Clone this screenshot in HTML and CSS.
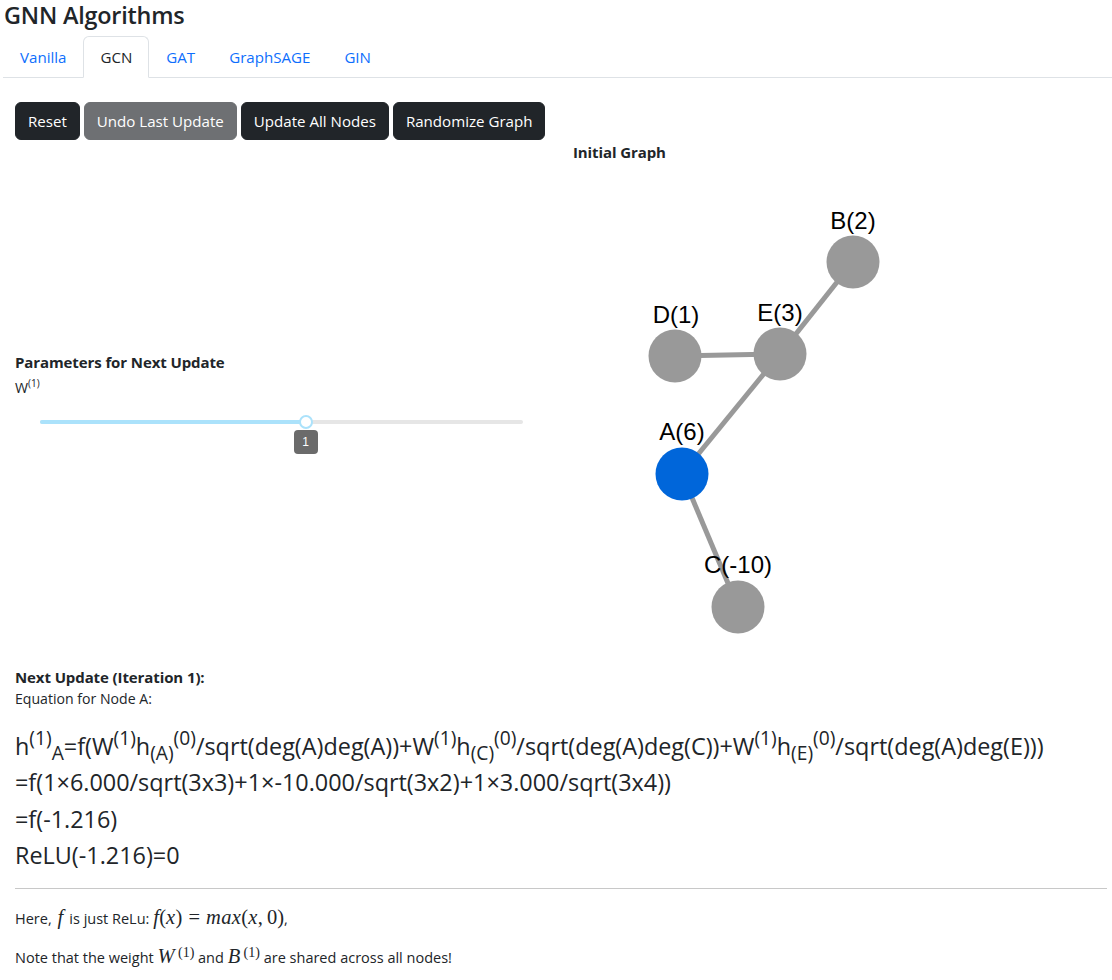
FILE: index.html
```html
<!DOCTYPE html>
<html>
<head>
<meta charset="utf-8">
<link rel="stylesheet" href="styles.css">
</head>
<body>
<div class="app">
  <h1 class="title">GNN Algorithms</h1>
  <ul class="tabs">
    <li class="tab">Vanilla</li>
    <li class="tab active">GCN</li>
    <li class="tab">GAT</li>
    <li class="tab">GraphSAGE</li>
    <li class="tab">GIN</li>
  </ul>
  <div class="content">
    <div class="buttons">
      <button class="btn">Reset</button>
      <button class="btn disabled">Undo Last Update</button>
      <button class="btn">Update All Nodes</button>
      <button class="btn">Randomize Graph</button>
    </div>
    <div class="main">
      <div class="left">
        <div class="params">
          <div class="bold">Parameters for Next Update</div>
          <div class="wlabel">W<sup>(1)</sup></div>
          <div class="slider">
            <div class="rail"></div>
            <div class="track" style="width:55%"></div>
            <div class="thumb" style="left:55%"></div>
            <div class="vlabel" style="left:55%">1</div>
          </div>
        </div>
      </div>
      <div class="right">
        <div class="gtitle">Initial Graph</div>
        <svg class="graph" width="540" height="480" viewBox="0 0 540 480">
          <g stroke="#999" stroke-width="5">
            <line x1="297" y1="99" x2="224" y2="191"/>
            <line x1="119" y1="193" x2="224" y2="191"/>
            <line x1="224" y1="191" x2="126" y2="311"/>
            <line x1="126" y1="311" x2="182" y2="444"/>
          </g>
          <g fill="#999">
            <circle cx="297" cy="99" r="26.5"/>
            <circle cx="224" cy="191" r="26.5"/>
            <circle cx="119" cy="193" r="26.5"/>
            <circle cx="182" cy="444" r="26.5"/>
          </g>
          <circle cx="126" cy="311" r="26.5" fill="#0066da"/>
          <g class="glabels" text-anchor="middle">
            <text x="297" y="66">B(2)</text>
            <text x="224" y="158">E(3)</text>
            <text x="120" y="160">D(1)</text>
            <text x="126" y="277">A(6)</text>
            <text x="182" y="410">C(-10)</text>
          </g>
        </svg>
      </div>
    </div>
    <div class="update">
      <div class="bold">Next Update (Iteration 1):</div>
      <div class="small">Equation for Node A:</div>
      <div class="eq">
        <div>h<sup>(1)</sup><sub>A</sub>=f(W<sup>(1)</sup>h<sub>(A)</sub><sup>(0)</sup>/sqrt(deg(A)deg(A))+W<sup>(1)</sup>h<sub>(C)</sub><sup>(0)</sup>/sqrt(deg(A)deg(C))+W<sup>(1)</sup>h<sub>(E)</sub><sup>(0)</sup>/sqrt(deg(A)deg(E)))</div>
        <div>=f(1×6.000/sqrt(3x3)+1×-10.000/sqrt(3x2)+1×3.000/sqrt(3x4))</div>
        <div>=f(-1.216)</div>
        <div>ReLU(-1.216)=0</div>
      </div>
    </div>
    <hr class="rule">
    <p class="note">Here, <span class="m fpad">f</span> is just ReLu: <span class="m">f</span><span class="mr">(</span><span class="m">x</span><span class="mr">)</span><span class="mr op">=</span><span class="m">max</span><span class="mr">(</span><span class="m">x</span><span class="mr">,&#8201;0)</span>,</p>
    <p class="note">Note that the weight <span class="m">W</span><sup class="msup">(1)</sup> and <span class="m">B</span><sup class="msup">(1)</sup> are shared across all nodes!</p>
  </div>
</div>
</body>
</html>
```

FILE: styles.css
```css
* { box-sizing: border-box; }
body {
  margin: 0;
  font-family: "Open Sans", "Noto Sans", sans-serif;
  color: #212529;
  background: #fff;
}
.app { padding: 0 5px 0 3px; }
.title {
  margin: 0;
  padding: 0 1px;
  font-size: 23.4px;
  font-weight: 600;
  line-height: 30px;
  letter-spacing: -0.2px;
}
.tabs {
  list-style: none;
  margin: 6px -5px 0 0;
  padding: 0;
  display: flex;
  border-bottom: 1px solid #dee2e6;
}
.tab {
  padding: 8px 16px;
  font-size: 15.1px;
  line-height: 24px;
  color: #0d6efd;
  border: 1px solid transparent;
  border-top-left-radius: 6px;
  border-top-right-radius: 6px;
  margin-bottom: -1px;
}
.tab.active {
  color: #212529;
  border-color: #dee2e6 #dee2e6 #fff;
  background: #fff;
}
.content { padding: 0 0 0 12px; }
.buttons {
  display: flex;
  gap: 4px;
  margin-top: 24px;
}
.btn {
  font-family: inherit;
  font-size: 15.1px;
  line-height: 24px;
  padding: 6px 12px;
  border: 1px solid #212529;
  border-radius: 6px;
  background: #212529;
  color: #fff;
}
.btn.disabled {
  opacity: 0.65;
}
.main {
  display: flex;
}
.left {
  flex: none;
  width: 541px;
  display: flex;
  flex-direction: column;
  justify-content: center;
  padding-top: 28px;
}
.bold {
  font-weight: 700;
  font-size: 15px;
  line-height: 22px;
  letter-spacing: -0.1px;
}
.small {
  font-size: 14.1px;
  line-height: 22px;
}
.wlabel {
  font-size: 14.1px;
  line-height: 20px;
}
.wlabel sup { font-size: 10px; }
.slider {
  position: relative;
  margin: 23px 0 0 25px;
  width: 483px;
  height: 40px;
}
.rail {
  position: absolute;
  left: 0; right: 0; top: 0;
  height: 4px;
  border-radius: 2px;
  background: #e6e6e6;
}
.track {
  position: absolute;
  left: 0; top: 0;
  height: 4px;
  border-radius: 2px;
  background: #abe2fb;
}
.thumb {
  position: absolute;
  top: -5px;
  width: 14px; height: 14px;
  margin-left: -7px;
  border-radius: 50%;
  background: #fff;
  border: 2px solid #abe2fb;
}
.vlabel {
  position: absolute;
  top: 10px;
  width: 24px;
  height: 24px;
  margin-left: -12px;
  border-radius: 4px;
  background: #6b6b6b;
  color: #fff;
  font-size: 12px;
  line-height: 24px;
  text-align: center;
  font-family: "Liberation Sans", sans-serif;
}
.right {
  flex: none;
  display: flex;
  flex-direction: column;
}
.gtitle {
  font-weight: 700;
  font-size: 15px;
  line-height: 22px;
  margin-top: 1px;
  padding-left: 17px;
  letter-spacing: -0.1px;
}
.graph { display: block; }
.glabels {
  font-family: "Liberation Sans", Arial, sans-serif;
  font-size: 24px;
  fill: #000;
}
.update { margin-top: 23px; }
.eq {
  margin-top: 18px;
  font-size: 23.4px;
  line-height: 36.3px;
}
.eq sup, .eq sub {
  font-size: 0.82em;
  line-height: 0;
}
.eq sup { vertical-align: 10px; }
.eq sub { vertical-align: -5px; }
.rule {
  margin: 15px 0 0 0;
  border: 0;
  border-top: 1px solid #c8c8c8;
}
.note {
  margin: 16px 0 0 0;
  font-size: 14.5px;
  line-height: 24px;
}
.note + .note { margin-top: 10px; }
.m {
  font-family: "Liberation Serif", "DejaVu Serif", serif;
  font-style: italic;
  font-size: 20.5px;
  letter-spacing: 0.4px;
}
.fpad { padding: 0 2px; }
.mr {
  font-family: "Liberation Serif", "DejaVu Serif", serif;
  font-size: 20.5px;
}
.op { padding: 0 6px; }
.msup {
  font-family: "Liberation Serif", serif;
  font-size: 14px;
  margin-left: 3px;
}
```
